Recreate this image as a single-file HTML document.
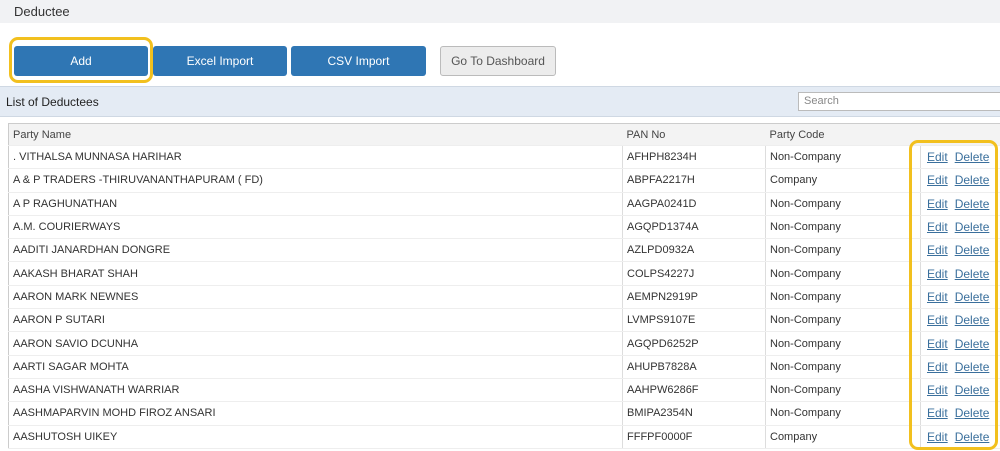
<!DOCTYPE html>
<html><head><style>
*{box-sizing:border-box;margin:0;padding:0}
body{width:1000px;height:451px;overflow:hidden;background:#fff;font-family:"Liberation Sans",sans-serif;position:relative}
.top{position:absolute;left:0;top:0;width:1000px;height:23px;background:#f1f2f4;font-size:13px;color:#333;padding:4px 0 0 14px}
.btn{position:absolute;top:46px;height:30px;background:#2f76b4;color:#fff;font-size:12px;text-align:center;line-height:30px;border-radius:3px}
.bar{position:absolute;left:0;top:86px;width:1000px;height:31px;background:#e4ebf4;border-top:1px solid #cfd8e3;border-bottom:1px solid #cfd8e3;font-size:12px;color:#222;padding:8px 0 0 6px}
.search{position:absolute;left:798px;top:92px;width:210px;height:19px;background:#fff;border:1px solid #bbb;font-size:11px;color:#888;padding:2px 5px}
table{position:absolute;left:8px;top:123px;border-collapse:collapse;table-layout:fixed;width:1000px;font-size:11px;color:#333;border-left:1px solid #ccc}
td,th{height:23.3px;padding:0 4px;border-right:1px solid #ddd;border-bottom:1px solid #eee;text-align:left;font-weight:normal;white-space:nowrap;overflow:hidden}
th{background:#f3f3f3;color:#444;height:22px;border-top:1px solid #ccc;border-right:none}
td:last-child{padding-left:6px}
a{color:#3a6f9c;text-decoration:underline;font-size:12px;margin-right:7px}
.y{position:absolute;border:3px solid #f2c01e;border-radius:9px}
</style></head><body>
<div class="top">Deductee</div>
<div class="btn" style="left:14px;width:134px">Add</div>
<div class="btn" style="left:153px;width:134px">Excel Import</div>
<div class="btn" style="left:291px;width:135px">CSV Import</div>
<div class="btn" style="left:440px;width:116px;background:#ececec;color:#555;border:1px solid #bbb;line-height:28px">Go To Dashboard</div>
<div class="y" style="left:9px;top:37px;width:144px;height:46px"></div>
<div class="bar">List of Deductees</div>
<div class="search">Search</div>
<table>
<colgroup><col style="width:614px"><col style="width:143px"><col style="width:155px"><col style="width:88px"></colgroup>
<tr><th>Party Name</th><th>PAN No</th><th>Party Code</th><th></th></tr>
<tr><td>. VITHALSA MUNNASA HARIHAR</td><td>AFHPH8234H</td><td>Non-Company</td><td><a>Edit</a><a>Delete</a></td></tr>
<tr><td>A &amp; P TRADERS -THIRUVANANTHAPURAM ( FD)</td><td>ABPFA2217H</td><td>Company</td><td><a>Edit</a><a>Delete</a></td></tr>
<tr><td>A P RAGHUNATHAN</td><td>AAGPA0241D</td><td>Non-Company</td><td><a>Edit</a><a>Delete</a></td></tr>
<tr><td>A.M. COURIERWAYS</td><td>AGQPD1374A</td><td>Non-Company</td><td><a>Edit</a><a>Delete</a></td></tr>
<tr><td>AADITI JANARDHAN DONGRE</td><td>AZLPD0932A</td><td>Non-Company</td><td><a>Edit</a><a>Delete</a></td></tr>
<tr><td>AAKASH BHARAT SHAH</td><td>COLPS4227J</td><td>Non-Company</td><td><a>Edit</a><a>Delete</a></td></tr>
<tr><td>AARON MARK NEWNES</td><td>AEMPN2919P</td><td>Non-Company</td><td><a>Edit</a><a>Delete</a></td></tr>
<tr><td>AARON P SUTARI</td><td>LVMPS9107E</td><td>Non-Company</td><td><a>Edit</a><a>Delete</a></td></tr>
<tr><td>AARON SAVIO DCUNHA</td><td>AGQPD6252P</td><td>Non-Company</td><td><a>Edit</a><a>Delete</a></td></tr>
<tr><td>AARTI SAGAR MOHTA</td><td>AHUPB7828A</td><td>Non-Company</td><td><a>Edit</a><a>Delete</a></td></tr>
<tr><td>AASHA VISHWANATH WARRIAR</td><td>AAHPW6286F</td><td>Non-Company</td><td><a>Edit</a><a>Delete</a></td></tr>
<tr><td>AASHMAPARVIN MOHD FIROZ ANSARI</td><td>BMIPA2354N</td><td>Non-Company</td><td><a>Edit</a><a>Delete</a></td></tr>
<tr><td>AASHUTOSH UIKEY</td><td>FFFPF0000F</td><td>Company</td><td><a>Edit</a><a>Delete</a></td></tr>
</table>
<div class="y" style="left:909px;top:140px;width:89px;height:310px"></div>
</body></html>
